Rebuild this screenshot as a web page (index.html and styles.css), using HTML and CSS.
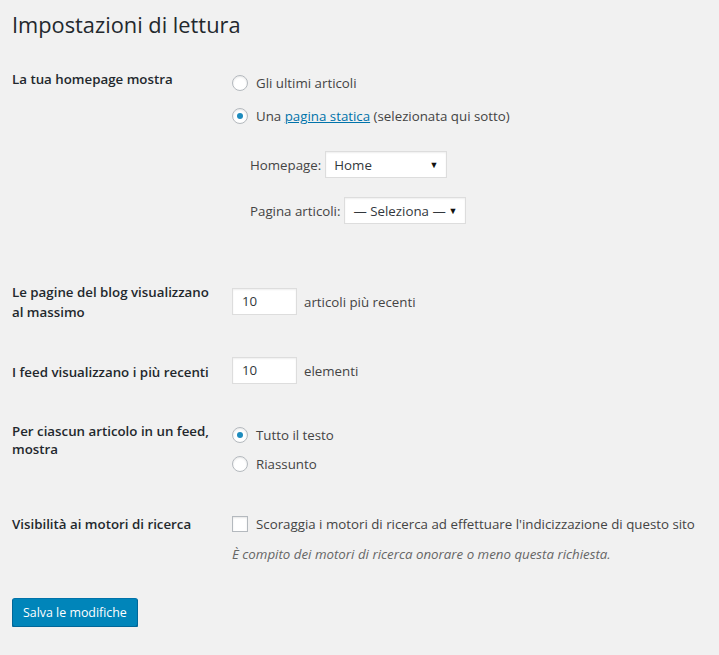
FILE: index.html
```html
<!DOCTYPE html>
<html lang="it">
<head>
<meta charset="utf-8">
<title>Impostazioni di lettura</title>
<link rel="stylesheet" href="styles.css">
</head>
<body>
<div class="wrap">
  <h1 class="title">Impostazioni di lettura</h1>

  <div class="row row-front">
    <div class="label">La tua homepage mostra</div>
    <div class="field">
      <div class="option"><span class="radio"></span><span>Gli ultimi articoli</span></div>
      <div class="option option-2"><span class="radio checked"></span><span>Una <a href="#" class="link">pagina statica</a> (selezionata qui sotto)</span></div>
      <div class="sub">
        <div class="sel-row"><span>Homepage:</span><div class="select sel-home"><span>Home</span><span class="arrow">▼</span></div></div>
        <div class="sel-row sel-row-2"><span>Pagina articoli:</span><div class="select sel-posts"><span>— Seleziona —</span><span class="arrow">▼</span></div></div>
      </div>
    </div>
  </div>

  <div class="row row-blog">
    <div class="label">Le pagine del blog visualizzano al massimo</div>
    <div class="field inline"><div class="num">10</div><span>articoli più recenti</span></div>
  </div>

  <div class="row row-feed">
    <div class="label">I feed visualizzano i più recenti</div>
    <div class="field inline"><div class="num">10</div><span>elementi</span></div>
  </div>

  <div class="row row-article">
    <div class="label label-tight">Per ciascun articolo in un feed, mostra</div>
    <div class="field">
      <div class="option"><span class="radio checked"></span><span>Tutto il testo</span></div>
      <div class="option option-3"><span class="radio"></span><span>Riassunto</span></div>
    </div>
  </div>

  <div class="row row-vis">
    <div class="label">Visibilità ai motori di ricerca</div>
    <div class="field">
      <div class="option"><span class="check"></span><span>Scoraggia i motori di ricerca ad effettuare l'indicizzazione di questo sito</span></div>
      <p class="desc">È compito dei motori di ricerca onorare o meno questa richiesta.</p>
    </div>
  </div>

  <div class="submit"><button class="button">Salva le modifiche</button></div>
</div>
</body>
</html>
```

FILE: styles.css
```css
html, body {
  margin: 0;
  padding: 0;
  background: #f1f1f1;
}
body {
  font-family: "Open Sans", "Noto Sans", sans-serif;
  font-size: 13.3px;
  color: #444;
  line-height: 20px;
}
.wrap {
  padding: 0 12px;
}
.title {
  margin: 0;
  padding: 10px 0 0 0;
  font-size: 21.8px;
  line-height: 30px;
  font-weight: 400;
  color: #23282d;
}
.row {
  display: flex;
}
.label {
  width: 200px;
  flex: none;
  padding-right: 20px;
  font-weight: 600;
  color: #23282d;
  line-height: 20px;
}
.label-tight {
  line-height: 18px;
}
.field {
  flex: 1;
}
.option {
  display: flex;
  align-items: center;
  gap: 8px;
  height: 20px;
}
.option-2 { margin-top: 13px; }
.option-3 { margin-top: 9px; }
.radio {
  width: 14px;
  height: 14px;
  border: 1px solid #b4b9be;
  border-radius: 50%;
  background: #fff;
  box-shadow: inset 0 1px 2px rgba(0,0,0,.1);
  display: flex;
  align-items: center;
  justify-content: center;
  flex: none;
}
.radio.checked::before {
  content: "";
  width: 6px;
  height: 6px;
  border-radius: 50%;
  background: #1e8cbe;
}
.check {
  width: 14px;
  height: 14px;
  border: 1px solid #b4b9be;
  background: #fff;
  box-shadow: inset 0 1px 2px rgba(0,0,0,.1);
  flex: none;
}
.link {
  color: #0073aa;
  text-decoration: underline;
}
.sub {
  padding-left: 18px;
  padding-top: 25px;
}
.sel-row {
  display: flex;
  align-items: center;
  gap: 4px;
}
.sel-row-2 { margin-top: 19px; }
.select {
  height: 25px;
  border: 1px solid #ddd;
  background: #fff;
  box-shadow: inset 0 1px 2px rgba(0,0,0,.07);
  display: flex;
  align-items: center;
  justify-content: space-between;
  padding: 0 8px;
  color: #32373c;
  box-sizing: content-box;
}
.sel-home { width: 104px; }
.sel-posts { width: 104px; }
.arrow {
  font-size: 9px;
  color: #111;
}
.inline {
  display: flex;
  align-items: center;
  gap: 7px;
}
.num {
  width: 54px;
  height: 25px;
  border: 1px solid #ddd;
  background: #fff;
  box-shadow: inset 0 1px 2px rgba(0,0,0,.07);
  padding: 0 0 0 9px;
  line-height: 25px;
  color: #32373c;
}
.desc {
  margin: 10px 0 0 0;
  font-style: italic;
  color: #666;
}
.row-front { margin-top: 29px; }
.row-front .field { padding-top: 4px; }
.row-blog { margin-top: 58px; }
.row-blog .field { align-self: flex-start; padding-top: 6px; }
.row-feed { margin-top: 35px; }
.row-feed .label { padding-top: 5px; }
.row-article { margin-top: 38px; }
.row-article .field { padding-top: 3px; }
.row-vis { margin-top: 40px; }
.submit { margin-top: 34px; }
.button {
  font-family: inherit;
  font-size: 12.4px;
  height: 29px;
  padding: 0 10px;
  background: #0085ba;
  border: 1px solid;
  border-color: #0073aa #006799 #006799;
  box-shadow: 0 1px 0 #006799;
  border-radius: 3px;
  color: #fff;
  cursor: pointer;
}
```
